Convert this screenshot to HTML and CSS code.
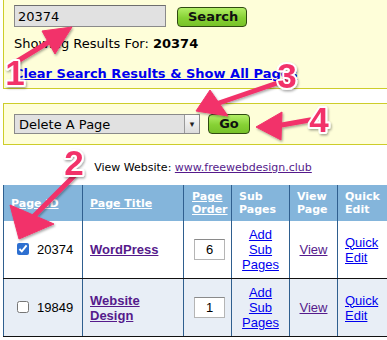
FILE: index.html
```html
<!DOCTYPE html>
<html>
<head>
<meta charset="utf-8">
<link rel="stylesheet" href="styles.css">
</head>
<body>
<div class="page">
  <div class="panel search-panel">
    <div class="search-row">
      <input class="search-input" type="text" value="20374">
      <button class="btn search-btn">Search</button>
    </div>
    <p class="showing">Showing Results For: <b>20374</b></p>
    <a class="clear-link" href="#">Clear Search Results &amp; Show All Pages</a>
  </div>

  <div class="panel action-panel">
    <div class="select-box">
      <select class="action-select"><option>Delete A Page</option></select>
      <span class="select-arrow">&#9662;</span>
    </div>
    <button class="btn go-btn">Go</button>
  </div>

  <p class="view-site">View Website: <a class="site-link" href="#">www.freewebdesign.club</a></p>

  <table class="pages">
    <colgroup>
      <col class="c-id"><col class="c-title"><col class="c-order"><col class="c-sub"><col class="c-view"><col class="c-edit">
    </colgroup>
    <thead>
      <tr>
        <th><a href="#">Page ID</a></th>
        <th><a href="#">Page Title</a></th>
        <th class="th-order"><a href="#">Page Order</a></th>
        <th>Sub Pages</th>
        <th>View Page</th>
        <th>Quick Edit</th>
      </tr>
    </thead>
    <tbody>
      <tr>
        <td class="td-id"><input type="checkbox" checked class="cb"><span>20374</span></td>
        <td class="td-title"><a href="#" class="visited">WordPress</a></td>
        <td class="td-center"><input class="order-input" type="text" value="6"></td>
        <td class="td-center"><a href="#" class="blue">Add<br>Sub<br>Pages</a></td>
        <td class="td-center"><a href="#" class="visited-plain">View</a></td>
        <td class="td-edit"><a href="#" class="blue">Quick<br>Edit</a></td>
      </tr>
      <tr class="alt">
        <td class="td-id"><input type="checkbox" class="cb"><span>19849</span></td>
        <td class="td-title"><a href="#" class="visited">Website Design</a></td>
        <td class="td-center"><input class="order-input" type="text" value="1"></td>
        <td class="td-center"><a href="#" class="blue">Add<br>Sub<br>Pages</a></td>
        <td class="td-center"><a href="#" class="visited-plain">View</a></td>
        <td class="td-edit"><a href="#" class="blue">Quick<br>Edit</a></td>
      </tr>
    </tbody>
  </table>

  <svg class="annotations" width="387" height="340" viewBox="0 0 387 340">
    <defs>
      <filter id="sh" x="-20%" y="-20%" width="140%" height="140%">
        <feDropShadow dx="1" dy="1.5" stdDeviation="1" flood-color="#000" flood-opacity="0.35"/>
      </filter>
    </defs>
    <g fill="#f2336b" stroke="#f2336b" filter="url(#sh)">
      <line x1="16" y1="62" x2="52" y2="40" stroke-width="5" stroke-linecap="round"/>
      <polygon points="72,27 42,31 55,54" stroke-width="1" stroke-linejoin="round"/>

      <line x1="286" y1="80" x2="216" y2="104" stroke-width="5" stroke-linecap="round"/>
      <polygon points="196,111 210,90 228,116" stroke-width="1" stroke-linejoin="round"/>

      <line x1="310" y1="120" x2="276" y2="126" stroke-width="5" stroke-linecap="round"/>
      <polygon points="256,127 282,112 281,140" stroke-width="1" stroke-linejoin="round"/>

      <line x1="74" y1="176" x2="34" y2="216" stroke-width="5" stroke-linecap="round"/>
      <polygon points="19,239 10,205 54,224" stroke-width="1" stroke-linejoin="round"/>
    </g>
    <g class="nums" filter="url(#sh)">
      <text x="15" y="85">1</text>
      <text x="287" y="88">3</text>
      <text x="319" y="132">4</text>
      <text x="74" y="175">2</text>
    </g>
  </svg>
</div>
</body>
</html>
```

FILE: styles.css
```css
html, body {
  margin: 0;
  padding: 0;
  background: #ffffff;
  overflow: hidden;
}

.page {
  position: relative;
  width: 400px;
  padding-left: 3px;
  font-family: "DejaVu Sans", Verdana, sans-serif;
  font-size: 13px;
  color: #000;
}

.panel {
  background: #fefed9;
  border: 1px solid #cdcd2a;
  border-right: none;
}

.search-panel {
  border-top: none;
  padding: 5px 0 10px 10px;
  height: 73px;
}

.search-row {
  display: flex;
  align-items: center;
  gap: 11px;
}

.search-input {
  width: 152px;
  height: 22px;
  box-sizing: border-box;
  margin: 0;
  padding: 0 3px;
  background: #e1e1e1;
  border: 1px solid #8a8a8a;
  border-top-color: #6e6e6e;
  font-family: "DejaVu Sans", Verdana, sans-serif;
  font-size: 13px;
  color: #000;
}

.btn {
  margin: 0;
  box-sizing: border-box;
  height: 20px;
  padding: 0 10px;
  border: 1px solid #2f4a10;
  border-radius: 4px;
  background: linear-gradient(#b2ee66, #86d134 55%, #78c229);
  font-family: "DejaVu Sans", Verdana, sans-serif;
  font-weight: bold;
  font-size: 13px;
  line-height: 18px;
  color: #111;
}

.search-btn {
  width: 70px;
  margin-top: 2px;
}

.showing {
  margin: 9px 0 0 0;
  line-height: 15px;
}

.clear-link {
  display: block;
  margin-top: 15px;
  line-height: 15px;
  font-weight: bold;
  color: #0000ee;
}

.action-panel {
  margin-top: 14px;
  display: flex;
  align-items: center;
  gap: 8px;
  padding: 10px 0 10px 10px;
}

.select-box {
  display: flex;
  width: 186px;
  height: 20px;
  box-sizing: border-box;
  border: 1px solid #8a8a8a;
  background: #e1e1e1;
}

.action-select {
  flex: 1;
  appearance: none;
  -webkit-appearance: none;
  border: none;
  margin: 0;
  padding: 0 4px;
  background: transparent;
  font-family: "DejaVu Sans", Verdana, sans-serif;
  font-size: 13px;
  color: #000;
}

.select-arrow {
  width: 14px;
  border-left: 1px solid #9a9a9a;
  background: linear-gradient(#fafafa, #dcdcdc);
  font-size: 9px;
  line-height: 18px;
  text-align: center;
  color: #222;
}

.go-btn {
  width: 42px;
  padding: 0;
}

.view-site {
  margin: 0;
  height: 40px;
  box-sizing: border-box;
  padding-top: 16px;
  text-align: center;
  font-size: 11px;
  line-height: 13px;
}

.site-link {
  color: #551a8b;
}

.pages {
  border-collapse: collapse;
  table-layout: fixed;
  width: 395px;
  font-family: "Liberation Sans", Arial, sans-serif;
  font-size: 13px;
}

.c-id { width: 79px; }
.c-title { width: 101px; }
.c-order { width: 48px; }
.c-sub { width: 58px; }
.c-view { width: 48px; }
.c-edit { width: 61px; }

.pages th {
  background: #84b5db;
  color: #fff;
  text-align: left;
  vertical-align: middle;
  font-family: "DejaVu Sans", Verdana, sans-serif;
  font-size: 11px;
  font-weight: bold;
  line-height: 13px;
  padding: 5px 7px;
  height: 26px;
  border-left: 1px solid #2f5f8f;
  border-right: 1px solid #2f5f8f;
}

.pages th a {
  color: #fff;
}

.pages th.th-order {
  padding-left: 8px;
  padding-right: 2px;
}

.pages td {
  height: 45px;
  padding: 6px 7px;
  vertical-align: middle;
  line-height: 15px;
  border-left: 1px solid #2f5f8f;
  border-right: 1px solid #2f5f8f;
  border-bottom: 1px solid #111;
}

.pages tr.alt td {
  background: #e8eef6;
}

.td-id {
  white-space: nowrap;
}

.cb {
  margin: 0 8px 0 6px;
  width: 12px;
  height: 12px;
  vertical-align: -1px;
  accent-color: #2d6fd0;
}

.td-title a {
  font-weight: bold;
}

.visited {
  color: #551a8b;
}

.visited-plain {
  color: #551a8b;
}

.blue {
  color: #0000ee;
}

.pages td.td-center {
  text-align: center;
  padding-left: 3px;
  padding-right: 3px;
}

.pages td.td-edit {
  padding-left: 7px;
}

.order-input {
  width: 31px;
  height: 21px;
  box-sizing: border-box;
  margin: 0 0 0 4px;
  padding: 0;
  border: 1px solid #b5b5b5;
  border-top-color: #8a8a8a;
  text-align: center;
  font-family: "Liberation Sans", Arial, sans-serif;
  font-size: 13px;
  background: #fff;
}

.annotations {
  position: absolute;
  left: 0;
  top: 0;
  pointer-events: none;
}

.nums text {
  font-family: "Liberation Sans", Arial, sans-serif;
  font-weight: bold;
  font-size: 35px;
  fill: #f2336b;
  stroke: #ffffff;
  stroke-width: 4px;
  stroke-linejoin: round;
  paint-order: stroke;
  text-anchor: middle;
}
```
